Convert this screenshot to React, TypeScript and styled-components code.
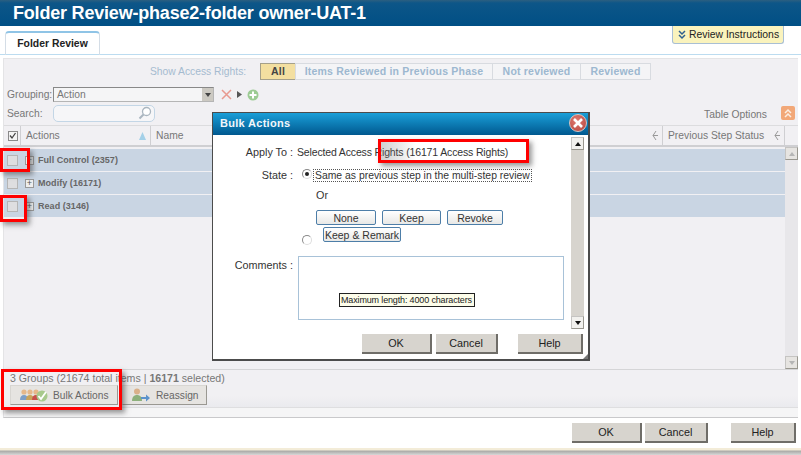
import React from 'react'
import styled, { createGlobalStyle } from 'styled-components'

const GlobalStyle = createGlobalStyle`
  html, body {
    margin: 0;
    padding: 0;
    background: #fff;
  }
  * {
    box-sizing: border-box;
  }
`

const Page = styled.div`
  position: relative;
  width: 801px;
  height: 455px;
  overflow: hidden;
  display: flex;
  flex-direction: column;
  font-family: "Liberation Sans", Arial, sans-serif;
  font-size: 10.3px;
  color: #333;
  background: #fff;
`

const TitleBar = styled.div`
  height: 26px;
  flex: none;
  padding-left: 13px;
  background: linear-gradient(#2c5f80 0, #0d5688 3px, #004f85 100%);
  color: #fff;
  font-size: 18px;
  font-weight: bold;
  line-height: 27px;
  letter-spacing: -0.2px;
  white-space: nowrap;
`

const TabStrip = styled.div`
  height: 29px;
  flex: none;
  display: flex;
  justify-content: space-between;
  align-items: flex-start;
  padding: 5px 17px 0 5px;
  border-bottom: 1px solid #bcdcf0;
`

const Tab = styled.div`
  width: 95px;
  height: 24px;
  border: 1px solid #d4dde6;
  border-top: 2px solid #8fc4e6;
  border-bottom: none;
  border-radius: 4px 4px 0 0;
  text-align: center;
  font-weight: bold;
  font-size: 10.4px;
  line-height: 21px;
  color: #222;
`

const InstructionsButton = styled.div`
  margin-top: -5px;
  width: 112px;
  height: 18px;
  display: flex;
  align-items: center;
  gap: 2px;
  padding-left: 4px;
  background: #faf3bd;
  border: 1px solid #a9bfd4;
  border-top: none;
  border-radius: 0 0 3px 3px;
  font-size: 10.4px;
  color: #222;
  white-space: nowrap;
`

const Panel = styled.div`
  margin: 3px 3px 0 3px;
  height: 360px;
  flex: none;
  display: flex;
  flex-direction: column;
  background: #f1f0f3;
  border: 1px solid #e4e4e6;
  border-right: none;
  border-bottom: 1px solid #c9c9cb;
`

const FilterRow = styled.div`
  height: 22px;
  flex: none;
  display: flex;
  align-items: center;
  padding: 3px 0 0 146px;
`

const FilterLabel = styled.span`
  width: 110px;
  color: #a5bbd0;
  font-size: 10.3px;
  white-space: nowrap;
`

const FilterButton = styled.span<{ $active?: boolean; $width: number }>`
  width: ${(p) => p.$width}px;
  height: 17px;
  margin-right: -1px;
  border: 1px solid ${(p) => (p.$active ? '#a5a08a' : '#d8dbe0')};
  background: ${(p) => (p.$active ? '#f3dfa0' : '#f4f4f6')};
  color: ${(p) => (p.$active ? '#444' : '#9db8d0')};
  font-weight: bold;
  font-size: 10.5px;
  line-height: 15px;
  text-align: center;
  white-space: nowrap;
  letter-spacing: 0.2px;
`

const FormRow = styled.div`
  display: flex;
  align-items: center;
  height: 17px;
  margin-top: 5px;
  padding-left: 3px;
  color: #777;
  font-size: 10.3px;
`

const FormLabel = styled.span`
  width: 46px;
`

const SelectBox = styled.div`
  width: 161px;
  height: 15px;
  display: flex;
  justify-content: space-between;
  padding-left: 3px;
  border: 1px solid #b5b5b5;
  border-top-color: #888;
  border-left-color: #888;
  background: #f5f5f6;
  line-height: 13px;
`

const SelectArrow = styled.span`
  width: 11px;
  background: #ccc9c2;
  display: flex;
  align-items: center;
  justify-content: center;
  &::after {
    content: '';
    border: 3px solid transparent;
    border-top: 4px solid #444;
    border-bottom: none;
  }
`

const ActionIcons = styled.span`
  display: flex;
  align-items: center;
  gap: 5px;
  margin-left: 7px;
`

const SearchBox = styled.div`
  width: 102px;
  height: 17px;
  display: flex;
  justify-content: flex-end;
  align-items: center;
  padding-right: 2px;
  background: #f6f6f8;
  border: 1px solid #c3d6e6;
  border-radius: 5px;
`

const SearchRow = styled(FormRow)`
  margin-top: 1px;
  height: 18px;
`

const OptionsLink = styled.span`
  margin-left: auto;
  margin-right: 14px;
  color: #777;
  font-size: 10.3px;
  padding-top: 3px;
`

const CollapseButton = styled.span`
  width: 14px;
  height: 14px;
  margin-right: 3px;
  display: flex;
  align-items: center;
  justify-content: center;
  background: #f2a878;
  border-radius: 2px;
`

const TableWrap = styled.div`
  flex: 1;
  min-height: 0;
  display: flex;
  flex-direction: column;
  margin-top: 3px;
`

const TableHeader = styled.div`
  height: 22px;
  flex: none;
  display: flex;
  border-top: 1px solid #dcdcde;
  border-bottom: 2px solid #cfcfd2;
  color: #777;
  font-size: 10.3px;
`

const HeaderCell = styled.div<{ $width: number }>`
  width: ${(p) => p.$width}px;
  flex: none;
  display: flex;
  align-items: center;
  justify-content: space-between;
  padding: 0 4px 0 5px;
  border-right: 1px solid #cfcfd2;
  white-space: nowrap;
`

const HeaderCheck = styled.div`
  width: 17px;
  flex: none;
  display: flex;
  align-items: center;
  justify-content: center;
  padding-left: 1px;
  border-right: 1px solid #cfcfd2;
`

const TableBody = styled.div`
  flex: 1;
  min-height: 0;
  display: flex;
`

const RowList = styled.div`
  flex: 1;
  padding-top: 2px;
`

const GroupRow = styled.div`
  height: 22px;
  margin-bottom: 1px;
  display: flex;
  align-items: center;
  background: #c9d5e3;
  color: #666;
  font-size: 9px;
  font-weight: bold;
  letter-spacing: 0.05px;
`

const RowCheck = styled.span`
  width: 11px;
  height: 11px;
  margin: 0 7px 0 3px;
  background: #dedee0;
  border: 1px solid #b5b5b5;
`

const Expander = styled.span`
  width: 9px;
  height: 9px;
  margin-right: 4px;
  display: flex;
  align-items: center;
  justify-content: center;
  border: 1px solid #999;
  background: #eee;
  color: #555;
  font-size: 9px;
  font-weight: normal;
  line-height: 7px;
`

const ScrollTrack = styled.div`
  width: 13px;
  flex: none;
  display: flex;
  flex-direction: column;
  justify-content: space-between;
  background: #e8e7ea;
`

const ScrollButton = styled.span<{ $color: string; $size?: number }>`
  height: ${(p) => p.$size ?? 13}px;
  display: flex;
  align-items: center;
  justify-content: center;
  background: ${(p) => p.$color};
  border: 1px solid #c5c4c2;
  border-right-color: #99978f;
  border-bottom-color: #99978f;
`

const UpArrow = styled.span<{ $color: string }>`
  border: 3px solid transparent;
  border-bottom: 4px solid ${(p) => p.$color};
  border-top: none;
`

const DownArrow = styled.span<{ $color: string }>`
  border: 3px solid transparent;
  border-top: 4px solid ${(p) => p.$color};
  border-bottom: none;
`

const PanelFooter = styled.div`
  height: 39px;
  flex: none;
  padding: 2px 0 0 6px;
  border-top: 1px solid #d5d5d7;
  border-bottom: 1px solid #dedee0;
  background: linear-gradient(#f1f0f3 70%, #eaeaee 100%);
  color: #777;
  font-size: 10.6px;
`

const FooterButtons = styled.div`
  display: flex;
  gap: 4px;
  margin-top: 1px;
`

const ToolButton = styled.span<{ $width: number }>`
  width: ${(p) => p.$width}px;
  height: 20px;
  display: flex;
  align-items: center;
  gap: 5px;
  padding-left: 9px;
  background: #e6e4e1;
  border: 1px solid #d8d6d2;
  border-right-color: #9a9892;
  border-bottom-color: #9a9892;
  color: #666;
  font-size: 10.2px;
`

const PanelEnd = styled.div`
  height: 9px;
  flex: none;
  background: #f5f5f6;
`

const FlatButton = styled.span<{ $width: number; $ml?: number }>`
  width: ${(p) => p.$width}px;
  height: 20px;
  margin-left: ${(p) => p.$ml ?? 0}px;
  display: flex;
  align-items: center;
  justify-content: center;
  background: #d7d4ce;
  border-right: 2px solid #6f6d68;
  border-bottom: 2px solid #6f6d68;
  color: #222;
  font-size: 10.8px;
`

const BottomBar = styled.div`
  flex: 1;
  display: flex;
  align-items: flex-start;
  justify-content: flex-end;
  padding: 5px 5px 0 0;
`

const BottomEdge = styled.div`
  height: 7px;
  flex: none;
  background: linear-gradient(#f3ecd8 0, #f3ecd8 2px, #a9a9a6 3px, #d8d8d8 100%);
`

const Modal = styled.div`
  position: absolute;
  left: 212px;
  top: 112px;
  width: 378px;
  height: 249px;
  display: flex;
  flex-direction: column;
  background: #fff;
  border: 1px solid #4c4c4c;
  border-right-width: 2px;
  border-bottom-width: 2px;
  color: #333;
  &::after {
    content: '';
    position: absolute;
    right: 0;
    bottom: 0;
    border-left: 5px solid transparent;
    border-bottom: 5px solid #777;
  }
`

const ModalTitle = styled.div`
  height: 22px;
  flex: none;
  padding-left: 7px;
  background: linear-gradient(#1a9fd8, #00588f);
  color: #f2f6fa;
  font-size: 11px;
  font-weight: bold;
  line-height: 21px;
  letter-spacing: 0.3px;
`

const CloseIcon = styled.span`
  position: absolute;
  right: 1px;
  top: 1px;
  width: 18px;
  height: 18px;
  display: flex;
  align-items: center;
  justify-content: center;
  border-radius: 50%;
  background: radial-gradient(circle at 40% 35%, #e07a70, #b4443c);
  border: 1px solid #d8c5c0;
`

const ModalBody = styled.div`
  flex: 1;
  min-height: 0;
  display: flex;
  padding: 2px 4px 0 0;
`

const FormArea = styled.div`
  flex: 1;
  padding-top: 9px;
`

const DialogRow = styled.div<{ $top: number; $height: number }>`
  display: flex;
  height: ${(p) => p.$height}px;
  margin-top: ${(p) => p.$top}px;
`

const DialogLabel = styled.span`
  width: 80px;
  flex: none;
  text-align: right;
  font-size: 10.8px;
  white-space: pre;
`

const CommentsLabel = styled(DialogLabel)`
  padding-top: 3px;
`

const ValueText = styled.span`
  margin-left: 4px;
  font-size: 10.5px;
  letter-spacing: -0.15px;
  white-space: nowrap;
`

const Radio = styled.span<{ $checked?: boolean }>`
  width: 10px;
  height: 10px;
  margin-left: 9px;
  flex: none;
  display: flex;
  align-items: center;
  justify-content: center;
  border-radius: 50%;
  border: 1px solid #8a8a8a;
  border-bottom-color: #ddd;
  border-right-color: #ddd;
  &::after {
    content: '';
    width: 4px;
    height: 4px;
    border-radius: 50%;
    background: ${(p) => (p.$checked ? '#222' : 'transparent')};
  }
`

const FocusText = styled.span`
  margin-left: 1px;
  padding: 0 1px;
  height: 13px;
  border: 1px dotted #555;
  font-size: 10.4px;
  line-height: 11px;
  white-space: nowrap;
`

const OrText = styled.div`
  margin: 6px 0 0 103px;
  height: 13px;
  font-size: 10.8px;
`

const StateButtons = styled.div`
  display: flex;
  gap: 6px;
  margin: 8px 0 0 103px;
`

const StateButton = styled.span<{ $width: number }>`
  width: ${(p) => p.$width}px;
  height: 15px;
  display: flex;
  align-items: center;
  justify-content: center;
  background: linear-gradient(#fff, #e8e8e6);
  border: 1px solid #4d7ea8;
  border-radius: 2px;
  font-size: 10.5px;
  white-space: nowrap;
`

const RemarkRow = styled.div`
  display: flex;
  margin: 2px 0 0 86px;
`

const RemarkRadio = styled(Radio)`
  margin: 8px 0 0 3px;
`

const RemarkButton = styled(StateButton)`
  margin-left: 11px;
`

const CommentBox = styled.div`
  position: relative;
  width: 266px;
  height: 64px;
  margin-left: 5px;
  border: 1px solid #a8c2d8;
`

const Tooltip = styled.span`
  position: absolute;
  left: 40px;
  top: 36px;
  width: 136px;
  height: 14px;
  padding-left: 1px;
  background: #fdfdea;
  border: 1px solid #222;
  color: #222;
  font-size: 9px;
  letter-spacing: -0.15px;
  line-height: 12px;
  white-space: nowrap;
`

const DialogScroll = styled.div`
  width: 13px;
  height: 192px;
  flex: none;
  display: flex;
  flex-direction: column;
  justify-content: space-between;
  background: #d7d4ce;
`

const ModalActions = styled.div`
  height: 34px;
  flex: none;
  display: flex;
  align-items: flex-start;
  padding: 9px 0 0 149px;
`

const Highlight = styled.div<{ $x: number; $y: number; $w: number; $h: number; $shade?: boolean }>`
  position: absolute;
  left: ${(p) => p.$x}px;
  top: ${(p) => p.$y}px;
  width: ${(p) => p.$w}px;
  height: ${(p) => p.$h}px;
  border: 3px solid #f00;
  box-shadow: 3px 3px 5px rgba(70, 70, 70, 0.55);
  background: ${(p) =>
    p.$shade ? 'linear-gradient(90deg, rgba(120, 120, 120, 0.35), rgba(120, 120, 120, 0) 35px)' : 'none'};
`

const ChevronsIcon = ({ up, color }: { up?: boolean; color: string }) => (
  <svg width="10" height="10" viewBox="0 0 10 10" fill="none" stroke={color} strokeWidth="1.5">
    <g transform={up ? 'rotate(180 5 5)' : undefined}>
      <path d="M2 1l3 3 3-3" />
      <path d="M2 5l3 3 3-3" />
    </g>
  </svg>
)

const CheckBoxIcon = () => (
  <svg width="10" height="10" viewBox="0 0 10 10">
    <rect x="0.5" y="0.5" width="9" height="9" fill="#f4f4f4" stroke="#8a8a8a" />
    <path d="M2 4.5l2 2.5 3.5-5" fill="none" stroke="#444" strokeWidth="1.3" />
  </svg>
)

const ResizeIcon = () => (
  <svg width="7" height="11" viewBox="0 0 7 11" fill="none" stroke="#999" strokeWidth="1">
    <path d="M5 1L2 5.5l3 4.5M2 5.5h5" />
  </svg>
)

const People = ({ x, color }: { x: number; color: string }) => (
  <g transform={`translate(${x} 0)`}>
    <circle cx="4" cy="4" r="2.6" fill="#e6b88a" />
    <path d="M0 12c0-3.5 1.6-5 4-5s4 1.5 4 5z" fill={color} />
  </g>
)

const BulkIcon = () => (
  <svg width="28" height="15" viewBox="0 0 28 15">
    <People x={0} color="#7f9fc6" />
    <People x={6} color="#c9a35a" />
    <People x={12} color="#c8504a" />
    <circle cx="22" cy="8" r="5.5" fill="#a8c98c" />
    <path d="M18.5 8l2.5 3 5-7" fill="none" stroke="#fff" strokeWidth="1.8" />
  </svg>
)

const ReassignIcon = () => (
  <svg width="19" height="14" viewBox="0 0 19 14">
    <circle cx="5" cy="3.5" r="3" fill="#d9b08a" />
    <path d="M0 13c0-4 2-6 5-6s5 2 5 6z" fill="#8db07c" />
    <path d="M9 9h5V6.5l4 3.5-4 3.5V11H9z" fill="#5b93cc" />
  </svg>
)

const App: React.FunctionComponent = () => {
  return (
    <Page>
      <GlobalStyle />
      <TitleBar>Folder Review-phase2-folder owner-UAT-1</TitleBar>
      <TabStrip>
        <Tab>Folder Review</Tab>
        <InstructionsButton>
          <ChevronsIcon color="#2f5f8f" />
          Review Instructions
        </InstructionsButton>
      </TabStrip>
      <Panel>
        <FilterRow>
          <FilterLabel>Show Access Rights:</FilterLabel>
          <FilterButton $active $width={36}>All</FilterButton>
          <FilterButton $width={198}>Items Reviewed in Previous Phase</FilterButton>
          <FilterButton $width={89}>Not reviewed</FilterButton>
          <FilterButton $width={71}>Reviewed</FilterButton>
        </FilterRow>
        <FormRow>
          <FormLabel>Grouping:</FormLabel>
          <SelectBox>
            Action
            <SelectArrow />
          </SelectBox>
          <ActionIcons>
            <svg width="11" height="11" viewBox="0 0 11 11" stroke="#e89a90" strokeWidth="1.5">
              <path d="M1 1l9 9M10 1L1 10" />
            </svg>
            <svg width="5" height="7" viewBox="0 0 5 7">
              <path d="M0 0l5 3.5L0 7z" fill="#555" />
            </svg>
            <svg width="12" height="12" viewBox="0 0 12 12">
              <circle cx="6" cy="6" r="5.5" fill="#9ccb93" />
              <path d="M6 2.5v7M2.5 6h7" stroke="#fff" strokeWidth="2" />
            </svg>
          </ActionIcons>
        </FormRow>
        <SearchRow>
          <FormLabel>Search:</FormLabel>
          <SearchBox>
            <svg width="14" height="14" viewBox="0 0 14 14" fill="none" stroke="#aab6c0" strokeWidth="1.3">
              <circle cx="8.5" cy="5.5" r="4" fill="#fff" />
              <path d="M5.5 8.5L1.5 12.5" strokeWidth="2" />
            </svg>
          </SearchBox>
          <OptionsLink>Table Options</OptionsLink>
          <CollapseButton>
            <ChevronsIcon up color="#fbeee2" />
          </CollapseButton>
        </SearchRow>
        <TableWrap>
          <TableHeader>
            <HeaderCheck>
              <CheckBoxIcon />
            </HeaderCheck>
            <HeaderCell $width={130}>
              Actions
              <svg width="7" height="8" viewBox="0 0 7 8">
                <path d="M3.5 0L7 8H0z" fill="#a4d0e8" />
              </svg>
            </HeaderCell>
            <HeaderCell $width={512}>
              Name
              <ResizeIcon />
            </HeaderCell>
            <HeaderCell $width={122}>
              Previous Step Status
              <ResizeIcon />
            </HeaderCell>
          </TableHeader>
          <TableBody>
            <RowList>
              <GroupRow>
                <RowCheck />
                <Expander>+</Expander>
                Full Control (2357)
              </GroupRow>
              <GroupRow>
                <RowCheck />
                <Expander>+</Expander>
                Modify (16171)
              </GroupRow>
              <GroupRow>
                <RowCheck />
                <Expander>+</Expander>
                Read (3146)
              </GroupRow>
            </RowList>
            <ScrollTrack>
              <ScrollButton $color="#e6e4e1"><UpArrow $color="#b5b5b5" /></ScrollButton>
              <ScrollButton $color="#e6e4e1"><DownArrow $color="#b5b5b5" /></ScrollButton>
            </ScrollTrack>
          </TableBody>
        </TableWrap>
        <PanelFooter>
          3 Groups (21674 total items | <b>16171</b> selected)
          <FooterButtons>
            <ToolButton $width={108}>
              <BulkIcon />
              Bulk Actions
            </ToolButton>
            <ToolButton $width={85}>
              <ReassignIcon />
              Reassign
            </ToolButton>
          </FooterButtons>
        </PanelFooter>
        <PanelEnd />
      </Panel>
      <BottomBar>
        <FlatButton $width={70}>OK</FlatButton>
        <FlatButton $width={63} $ml={3}>Cancel</FlatButton>
        <FlatButton $width={65} $ml={23}>Help</FlatButton>
      </BottomBar>
      <BottomEdge />

      <Modal>
        <ModalTitle>Bulk Actions</ModalTitle>
        <CloseIcon>
          <svg width="10" height="10" viewBox="0 0 10 10" stroke="#fff" strokeWidth="2.6">
            <path d="M1 1l8 8M9 1L1 9" />
          </svg>
        </CloseIcon>
        <ModalBody>
          <FormArea>
            <DialogRow $top={0} $height={14}>
              <DialogLabel>Apply To :</DialogLabel>
              <ValueText>Selected Access Rights (16171 Access Rights)</ValueText>
            </DialogRow>
            <DialogRow $top={9} $height={14}>
              <DialogLabel>State :</DialogLabel>
              <Radio $checked />
              <FocusText>Same as previous step in the multi-step review</FocusText>
            </DialogRow>
            <OrText>Or</OrText>
            <StateButtons>
              <StateButton $width={60}>None</StateButton>
              <StateButton $width={59}>Keep</StateButton>
              <StateButton $width={56}>Revoke</StateButton>
            </StateButtons>
            <RemarkRow>
              <RemarkRadio />
              <RemarkButton $width={78}>Keep &amp; Remark</RemarkButton>
            </RemarkRow>
            <DialogRow $top={11} $height={64}>
              <CommentsLabel>Comments :</CommentsLabel>
              <CommentBox>
                <Tooltip>Maximum length: 4000 characters</Tooltip>
              </CommentBox>
            </DialogRow>
          </FormArea>
          <DialogScroll>
            <ScrollButton $color="#f2f1ee"><UpArrow $color="#111" /></ScrollButton>
            <ScrollButton $color="#f2f1ee"><DownArrow $color="#111" /></ScrollButton>
          </DialogScroll>
        </ModalBody>
        <ModalActions>
          <FlatButton $width={70}>OK</FlatButton>
          <FlatButton $width={62} $ml={4}>Cancel</FlatButton>
          <FlatButton $width={65} $ml={20}>Help</FlatButton>
        </ModalActions>
      </Modal>

      <Highlight $x={0} $y={148} $w={30} $h={24} />
      <Highlight $x={0} $y={195} $w={27} $h={27} />
      <Highlight $x={378} $y={139} $w={151} $h={24} $shade />
      <Highlight $x={1} $y={369} $w={121} $h={41} />
    </Page>
  )
}

export default App
